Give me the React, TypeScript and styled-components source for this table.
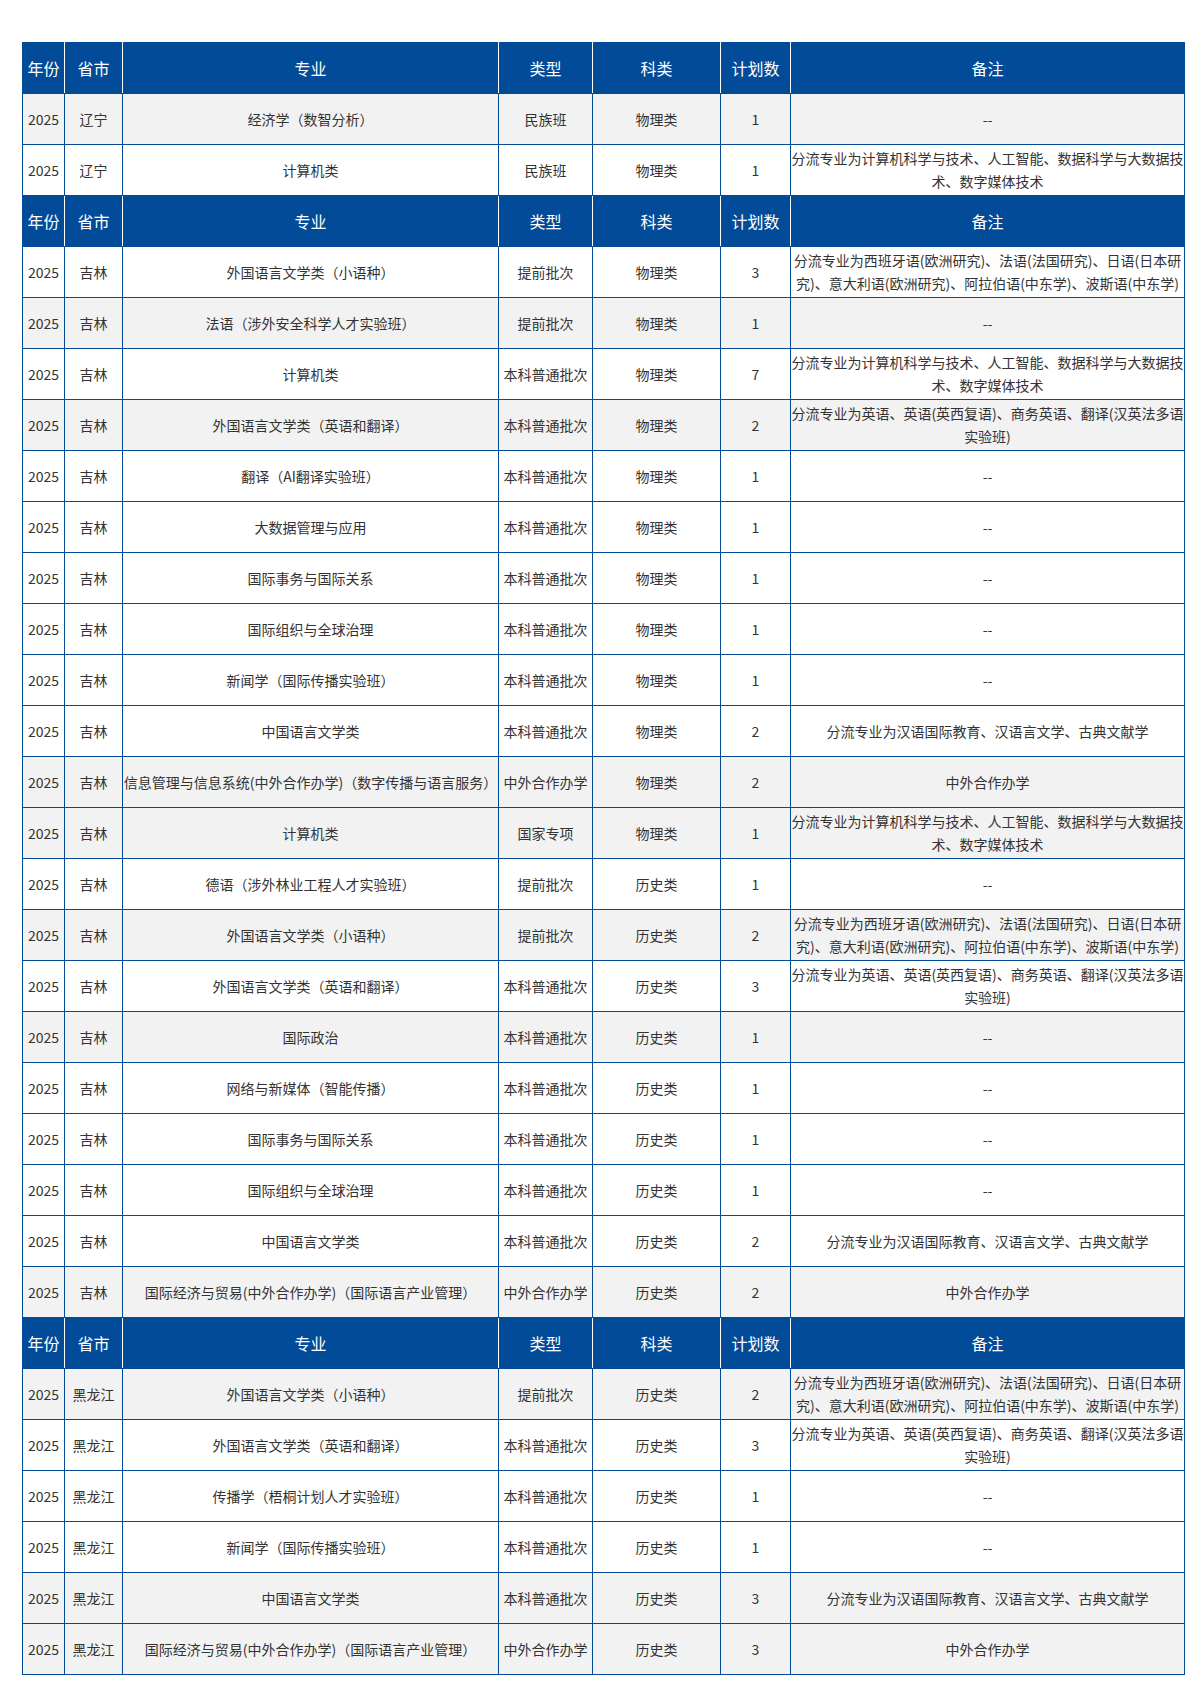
import React from "react";
import styled, { createGlobalStyle } from "styled-components";

const GlobalStyle = createGlobalStyle`
  html, body {
    margin: 0;
    padding: 0;
    background: #ffffff;
  }
  body {
    font-family: "Noto Sans CJK SC", "Microsoft YaHei", "Noto Sans", sans-serif;
    color: #333333;
  }
`;

const BLUE = "#024b98";

const Page = styled.div`
  padding: 42px 7px 9px 22px;
`;

const Table = styled.table`
  width: 1162px;
  border-collapse: collapse;
  table-layout: fixed;
`;

const Col = styled.col<{ $w: number }>`
  width: ${(p) => p.$w}px;
`;

const HeadCell = styled.th`
  height: 50px;
  padding: 0;
  background: ${BLUE};
  color: #ffffff;
  font-size: 16px;
  font-weight: 400;
  text-align: center;
  vertical-align: middle;
  border: 1px solid ${BLUE};
  border-right: 1px solid #ffffff;
  &:last-child {
    border-right: 1px solid ${BLUE};
  }
`;

const Row = styled.tr<{ $shade?: boolean }>`
  background: ${(p) => (p.$shade ? "#f2f2f2" : "#ffffff")};
`;

const Cell = styled.td<{ $nowrap?: boolean }>`
  height: 50px;
  padding: 0;
  font-size: 14px;
  line-height: 23px;
  color: #333333;
  text-align: center;
  vertical-align: middle;
  border: 1px solid ${BLUE};
  white-space: ${(p) => (p.$nowrap ? "nowrap" : "normal")};
  overflow: hidden;
`;

type Item = {
  p: string;
  m: string;
  t: string;
  k: string;
  n: number;
  r: string;
  g?: boolean;
};

const R_CS = "分流专业为计算机科学与技术、人工智能、数据科学与大数据技术、数字媒体技术";
const R_XY = "分流专业为西班牙语(欧洲研究)、法语(法国研究)、日语(日本研究)、意大利语(欧洲研究)、阿拉伯语(中东学)、波斯语(中东学)";
const R_EN = "分流专业为英语、英语(英西复语)、商务英语、翻译(汉英法多语实验班)";
const R_ZW = "分流专业为汉语国际教育、汉语言文学、古典文献学";
const D = "--";

const sections: Item[][] = [
  [
    { p: "辽宁", m: "经济学（数智分析）", t: "民族班", k: "物理类", n: 1, r: D, g: true },
    { p: "辽宁", m: "计算机类", t: "民族班", k: "物理类", n: 1, r: R_CS },
  ],
  [
    { p: "吉林", m: "外国语言文学类（小语种）", t: "提前批次", k: "物理类", n: 3, r: R_XY },
    { p: "吉林", m: "法语（涉外安全科学人才实验班）", t: "提前批次", k: "物理类", n: 1, r: D, g: true },
    { p: "吉林", m: "计算机类", t: "本科普通批次", k: "物理类", n: 7, r: R_CS },
    { p: "吉林", m: "外国语言文学类（英语和翻译）", t: "本科普通批次", k: "物理类", n: 2, r: R_EN, g: true },
    { p: "吉林", m: "翻译（AI翻译实验班）", t: "本科普通批次", k: "物理类", n: 1, r: D },
    { p: "吉林", m: "大数据管理与应用", t: "本科普通批次", k: "物理类", n: 1, r: D },
    { p: "吉林", m: "国际事务与国际关系", t: "本科普通批次", k: "物理类", n: 1, r: D },
    { p: "吉林", m: "国际组织与全球治理", t: "本科普通批次", k: "物理类", n: 1, r: D },
    { p: "吉林", m: "新闻学（国际传播实验班）", t: "本科普通批次", k: "物理类", n: 1, r: D },
    { p: "吉林", m: "中国语言文学类", t: "本科普通批次", k: "物理类", n: 2, r: R_ZW },
    { p: "吉林", m: "信息管理与信息系统(中外合作办学)（数字传播与语言服务）", t: "中外合作办学", k: "物理类", n: 2, r: "中外合作办学", g: true },
    { p: "吉林", m: "计算机类", t: "国家专项", k: "物理类", n: 1, r: R_CS, g: true },
    { p: "吉林", m: "德语（涉外林业工程人才实验班）", t: "提前批次", k: "历史类", n: 1, r: D },
    { p: "吉林", m: "外国语言文学类（小语种）", t: "提前批次", k: "历史类", n: 2, r: R_XY, g: true },
    { p: "吉林", m: "外国语言文学类（英语和翻译）", t: "本科普通批次", k: "历史类", n: 3, r: R_EN },
    { p: "吉林", m: "国际政治", t: "本科普通批次", k: "历史类", n: 1, r: D, g: true },
    { p: "吉林", m: "网络与新媒体（智能传播）", t: "本科普通批次", k: "历史类", n: 1, r: D },
    { p: "吉林", m: "国际事务与国际关系", t: "本科普通批次", k: "历史类", n: 1, r: D },
    { p: "吉林", m: "国际组织与全球治理", t: "本科普通批次", k: "历史类", n: 1, r: D },
    { p: "吉林", m: "中国语言文学类", t: "本科普通批次", k: "历史类", n: 2, r: R_ZW },
    { p: "吉林", m: "国际经济与贸易(中外合作办学)（国际语言产业管理）", t: "中外合作办学", k: "历史类", n: 2, r: "中外合作办学", g: true },
  ],
  [
    { p: "黑龙江", m: "外国语言文学类（小语种）", t: "提前批次", k: "历史类", n: 2, r: R_XY, g: true },
    { p: "黑龙江", m: "外国语言文学类（英语和翻译）", t: "本科普通批次", k: "历史类", n: 3, r: R_EN },
    { p: "黑龙江", m: "传播学（梧桐计划人才实验班）", t: "本科普通批次", k: "历史类", n: 1, r: D },
    { p: "黑龙江", m: "新闻学（国际传播实验班）", t: "本科普通批次", k: "历史类", n: 1, r: D },
    { p: "黑龙江", m: "中国语言文学类", t: "本科普通批次", k: "历史类", n: 3, r: R_ZW, g: true },
    { p: "黑龙江", m: "国际经济与贸易(中外合作办学)（国际语言产业管理）", t: "中外合作办学", k: "历史类", n: 3, r: "中外合作办学", g: true },
  ],
];

const heads = ["年份", "省市", "专业", "类型", "科类", "计划数", "备注"];
const widths = [42, 58, 376, 94, 128, 70, 394];

export default function App() {
  return (
    <>
      <GlobalStyle />
      <Page>
        <Table>
          <colgroup>
            {widths.map((w, i) => (
              <Col key={i} $w={w} />
            ))}
          </colgroup>
          {sections.map((rows, si) => (
            <tbody key={si}>
              <tr>
                {heads.map((h) => (
                  <HeadCell key={h}>{h}</HeadCell>
                ))}
              </tr>
              {rows.map((r, ri) => (
                <Row key={ri} $shade={r.g}>
                  <Cell>2025</Cell>
                  <Cell $nowrap>{r.p}</Cell>
                  <Cell $nowrap>{r.m}</Cell>
                  <Cell $nowrap>{r.t}</Cell>
                  <Cell>{r.k}</Cell>
                  <Cell>{r.n}</Cell>
                  <Cell>{r.r}</Cell>
                </Row>
              ))}
            </tbody>
          ))}
        </Table>
      </Page>
    </>
  );
}
